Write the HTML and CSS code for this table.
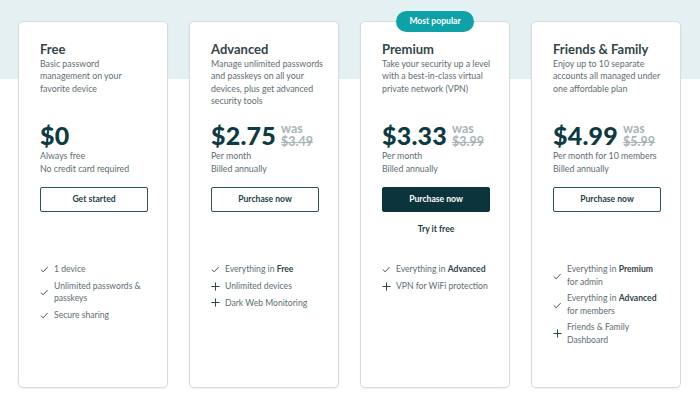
FILE: index.html
```html
<!DOCTYPE html>
<html lang="en">
<head>
<meta charset="utf-8">
<title>Plans</title>
<link rel="stylesheet" href="styles.css">
</head>
<body>
<div class="page">
  <div class="band"></div>
  <div class="cards">
    <div class="card">
      <h2 class="title">Free</h2>
      <p class="desc">Basic password<br>management on your<br>favorite device</p>
      <div class="price-row"><span class="price">$0</span></div>
      <p class="sub">Always free<br>No credit card required</p>
      <div class="actions"><a class="btn">Get started</a></div>
      <ul class="features">
        <li><svg class="ico" viewBox="0 0 10 10"><path d="M1 5.4 L3.7 8 L9 2.4"/></svg><span>1 device</span></li>
        <li><svg class="ico" viewBox="0 0 10 10"><path d="M1 5.4 L3.7 8 L9 2.4"/></svg><span>Unlimited passwords &amp;<br>passkeys</span></li>
        <li><svg class="ico" viewBox="0 0 10 10"><path d="M1 5.4 L3.7 8 L9 2.4"/></svg><span>Secure sharing</span></li>
      </ul>
    </div>
    <div class="card">
      <h2 class="title">Advanced</h2>
      <p class="desc">Manage unlimited passwords<br>and passkeys on all your<br>devices, plus get advanced<br>security tools</p>
      <div class="price-row"><span class="price">$2.75</span><span class="was"><span>was</span><s>$3.49</s></span></div>
      <p class="sub">Per month<br>Billed annually</p>
      <div class="actions"><a class="btn">Purchase now</a></div>
      <ul class="features">
        <li><svg class="ico" viewBox="0 0 10 10"><path d="M1 5.4 L3.7 8 L9 2.4"/></svg><span>Everything in <b>Free</b></span></li>
        <li><svg class="ico plus" viewBox="0 0 10 10"><path d="M5 0.5 V9.5 M0.5 5 H9.5"/></svg><span>Unlimited devices</span></li>
        <li><svg class="ico plus" viewBox="0 0 10 10"><path d="M5 0.5 V9.5 M0.5 5 H9.5"/></svg><span>Dark Web Monitoring</span></li>
      </ul>
    </div>
    <div class="card popular">
      <div class="badge">Most popular</div>
      <h2 class="title">Premium</h2>
      <p class="desc">Take your security up a level<br>with a best-in-class virtual<br>private network (VPN)</p>
      <div class="price-row"><span class="price">$3.33</span><span class="was"><span>was</span><s>$3.99</s></span></div>
      <p class="sub">Per month<br>Billed annually</p>
      <div class="actions"><a class="btn primary">Purchase now</a><a class="link">Try it free</a></div>
      <ul class="features">
        <li><svg class="ico" viewBox="0 0 10 10"><path d="M1 5.4 L3.7 8 L9 2.4"/></svg><span>Everything in <b>Advanced</b></span></li>
        <li><svg class="ico plus" viewBox="0 0 10 10"><path d="M5 0.5 V9.5 M0.5 5 H9.5"/></svg><span>VPN for WiFi protection</span></li>
      </ul>
    </div>
    <div class="card">
      <h2 class="title">Friends &amp; Family</h2>
      <p class="desc">Enjoy up to 10 separate<br>accounts all managed under<br>one affordable plan</p>
      <div class="price-row"><span class="price">$4.99</span><span class="was"><span>was</span><s>$5.99</s></span></div>
      <p class="sub">Per month for 10 members<br>Billed annually</p>
      <div class="actions"><a class="btn">Purchase now</a></div>
      <ul class="features">
        <li><svg class="ico" viewBox="0 0 10 10"><path d="M1 5.4 L3.7 8 L9 2.4"/></svg><span>Everything in <b>Premium</b><br>for admin</span></li>
        <li><svg class="ico" viewBox="0 0 10 10"><path d="M1 5.4 L3.7 8 L9 2.4"/></svg><span>Everything in <b>Advanced</b><br>for members</span></li>
        <li><svg class="ico plus" viewBox="0 0 10 10"><path d="M5 0.5 V9.5 M0.5 5 H9.5"/></svg><span>Friends &amp; Family<br>Dashboard</span></li>
      </ul>
    </div>
  </div>
</div>
</body>
</html>
```

FILE: styles.css
```css
* { box-sizing: border-box; }
html, body { margin: 0; padding: 0; background: #ffffff; }
body {
  font-family: Lato, "Open Sans", sans-serif;
  color: #5b6a70;
  width: 700px;
  height: 408px;
  overflow: hidden;
}
.page { position: relative; width: 700px; height: 408px; }
.band {
  height: 79px;
  background: #e5f0f2;
}
.cards {
  position: absolute;
  top: 21px;
  left: 18px;
  right: 19px;
  display: grid;
  grid-template-columns: repeat(4, 150px);
  column-gap: 21px;
}
.card {
  position: relative;
  height: 367px;
  background: #ffffff;
  border: 1px solid #d6dcde;
  border-radius: 5px;
  box-shadow: 0 1px 2px rgba(0,0,0,0.06);
  padding: 19px 14px 0 21px;
}
.badge {
  position: absolute;
  top: -11px;
  left: 50%;
  transform: translateX(-50%);
  width: 78px;
  height: 21px;
  line-height: 21px;
  border-radius: 11px;
  background: #0ea2a8;
  color: #ffffff;
  font-size: 8.6px;
  font-weight: 700;
  text-align: center;
}
.title {
  margin: 0;
  font-size: 13px;
  line-height: 17px;
  font-weight: 700;
  color: #34444b;
}
.desc {
  margin: 0;
  height: 62px;
  font-size: 8.8px;
  line-height: 12.4px;
  color: #5e6d73;
  white-space: nowrap;
}
.price-row {
  display: flex;
  align-items: center;
  height: 30px;
}
.price {
  font-size: 25px;
  font-weight: 900;
  color: #0e3a44;
  letter-spacing: 0.2px;
}
.was {
  display: flex;
  flex-direction: column;
  margin-left: 5px;
  font-size: 12.5px;
  line-height: 13px;
  font-weight: 700;
  color: #a9b4b8;
}
.was s { text-decoration-thickness: 1px; }
.sub {
  margin: 0;
  font-size: 8.8px;
  line-height: 12.7px;
  color: #5e6d73;
}
.actions {
  width: 108px;
  height: 88px;
  padding-top: 12px;
  display: flex;
  flex-direction: column;
  align-items: stretch;
}
.btn {
  display: block;
  height: 25px;
  line-height: 23px;
  border: 1px solid #2b5258;
  border-radius: 2px;
  text-align: center;
  font-size: 8.6px;
  font-weight: 700;
  color: #234148;
}
.btn.primary {
  background: #0c343c;
  border-color: #0c343c;
  color: #ffffff;
}
.link {
  display: block;
  margin-top: 11px;
  text-align: center;
  font-size: 8.6px;
  line-height: 12px;
  font-weight: 700;
  color: #1f3a40;
}
.features {
  list-style: none;
  margin: 0;
  padding: 0;
  display: flex;
  flex-direction: column;
  gap: 4.2px;
}
.features li {
  display: flex;
  align-items: center;
  font-size: 8.6px;
  line-height: 12.4px;
  color: #5e6d73;
  white-space: nowrap;
}
.features b { color: #34444b; font-weight: 700; }
.ico {
  flex: none;
  width: 8.5px;
  height: 8.5px;
  margin-right: 5.5px;
  fill: none;
  stroke: #2f4d54;
  stroke-width: 1.1;
}
.ico.plus { width: 9px; height: 9px; margin-right: 5px; stroke: #2d474d; stroke-width: 1.1; }
```
